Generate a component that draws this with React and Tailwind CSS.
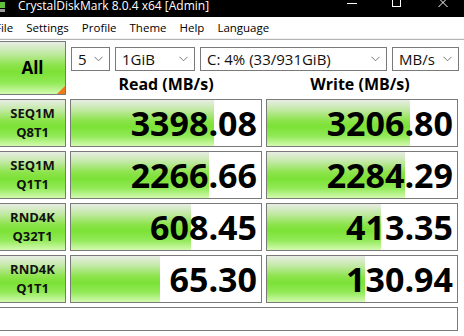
import React from "react";

const rows = [
  { l1: "SEQ1M", l2: "Q8T1", read: "3398.08", readBar: 143, write: "3206.80", writeBar: 143 },
  { l1: "SEQ1M", l2: "Q1T1", read: "2266.66", readBar: 138, write: "2284.29", writeBar: 138 },
  { l1: "RND4K", l2: "Q32T1", read: "608.45", readBar: 120, write: "413.35", writeBar: 114 },
  { l1: "RND4K", l2: "Q1T1", read: "65.30", readBar: 89, write: "130.94", writeBar: 98 },
];

const menu = ["File", "Settings", "Profile", "Theme", "Help", "Language"];

const greenGrad =
  "bg-[linear-gradient(to_bottom,#e8ede4_0%,#c0e9a2_22%,#8ce34a_45%,#7ce236_58%,#90e956_78%,#d4fab0_100%)]";

const Combo = ({ value, className }) => (
  <div
    className={`h-[24px] border border-[#7a7a7a] bg-white flex items-center justify-between pl-[6px] pr-[6px] text-[15px] text-[#111] ${className}`}
  >
    <span className="leading-none whitespace-nowrap">{value}</span>
    <svg width="9" height="6" viewBox="0 0 9 6" className="shrink-0">
      <path d="M0.5 0.8 L4.5 4.8 L8.5 0.8" fill="none" stroke="#777" strokeWidth="1" />
    </svg>
  </div>
);

const ResultBox = ({ value, bar }) => (
  <div className="relative h-[48px] border border-[#7a7a7a] bg-white flex items-center justify-end pr-[4px] overflow-hidden">
    <div className={`absolute left-0 top-0 bottom-0 ${greenGrad}`} style={{ width: bar }} />
    <span className="relative text-[34px] font-bold leading-none text-black">{value}</span>
  </div>
);

export default function App() {
  return (
    <div className="w-[464px] h-[336px] bg-white overflow-hidden font-['Open_Sans','Noto_Sans',sans-serif]">
      {/* title bar */}
      <div className="relative h-[17px] bg-black">
        <div className="absolute left-0 top-[2px] w-[5px] h-[6px] bg-[#5fc23a]" />
        <div className="absolute left-0 top-[9px] w-[5px] h-[3px] bg-[#9a9a9a]" />
        <span className="absolute left-[18px] top-[-3px] text-[12px] text-white whitespace-nowrap">
          CrystalDiskMark 8.0.4 x64 [Admin]
        </span>
        <div className="absolute left-[347px] top-[3px] w-[10px] h-px bg-white" />
        <div className="absolute left-[392px] top-[-2px] w-[9px] h-[9px] border border-white" />
        <svg className="absolute left-[438px] top-[-1px]" width="10" height="8" viewBox="0 0 10 8">
          <path d="M0.5 -1 L9.5 8 M9.5 -1 L0.5 8" stroke="#fff" strokeWidth="1" />
        </svg>
      </div>

      {/* menu bar */}
      <div className="h-[21px] flex items-center gap-[13px] ml-[-5px] text-[11.5px] text-black">
        {menu.map((m) => (
          <span key={m} className="whitespace-nowrap">
            {m}
          </span>
        ))}
      </div>
      <div className="h-[2px] bg-[#f0f0f0] border-b border-[#b4b4b4]" />

      {/* main */}
      <div className="pt-[1px] flex flex-col gap-[4px]">
        <div className="flex gap-[4px] h-[54px]">
          <div
            className={`relative w-[66px] h-[54px] border border-l-0 border-[#7a7a7a] ${greenGrad} flex items-center justify-center text-[17px] font-bold text-black`}
          >
            All
            <div className="absolute right-0 bottom-0 w-0 h-0 border-l-[8px] border-l-transparent border-b-[8px] border-b-[#f07818]" />
          </div>
          <div className="flex flex-col">
            <div className="flex gap-[5px] mt-[6px] ml-[1px]">
              <Combo value="5" className="w-[39px]" />
              <Combo value="1GiB" className="w-[80px]" />
              <Combo value="C: 4% (33/931GiB)" className="w-[187px]" />
              <Combo value="MB/s" className="w-[67px]" />
            </div>
            <div className="flex mt-[5px] text-[16px] font-bold text-black leading-none">
              <div className="w-[192px] text-center">Read (MB/s)</div>
              <div className="w-[196px] text-center">Write (MB/s)</div>
            </div>
          </div>
        </div>

        {rows.map((r, i) => (
          <div key={i} className="flex gap-[4px]">
            <div
              className={`w-[66px] h-[48px] border border-l-0 border-[#7a7a7a] ${greenGrad} flex flex-col items-center justify-center text-[13px] font-bold text-[#111] leading-[19px]`}
            >
              <span>{r.l1}</span>
              <span>{r.l2}</span>
            </div>
            <div className="w-[192px]">
              <ResultBox value={r.read} bar={r.readBar} />
            </div>
            <div className="w-[192px]">
              <ResultBox value={r.write} bar={r.writeBar} />
            </div>
          </div>
        ))}

        <div className="w-[458px] h-[24px] border border-l-0 border-[#7a7a7a] bg-white" />
      </div>
    </div>
  );
}
